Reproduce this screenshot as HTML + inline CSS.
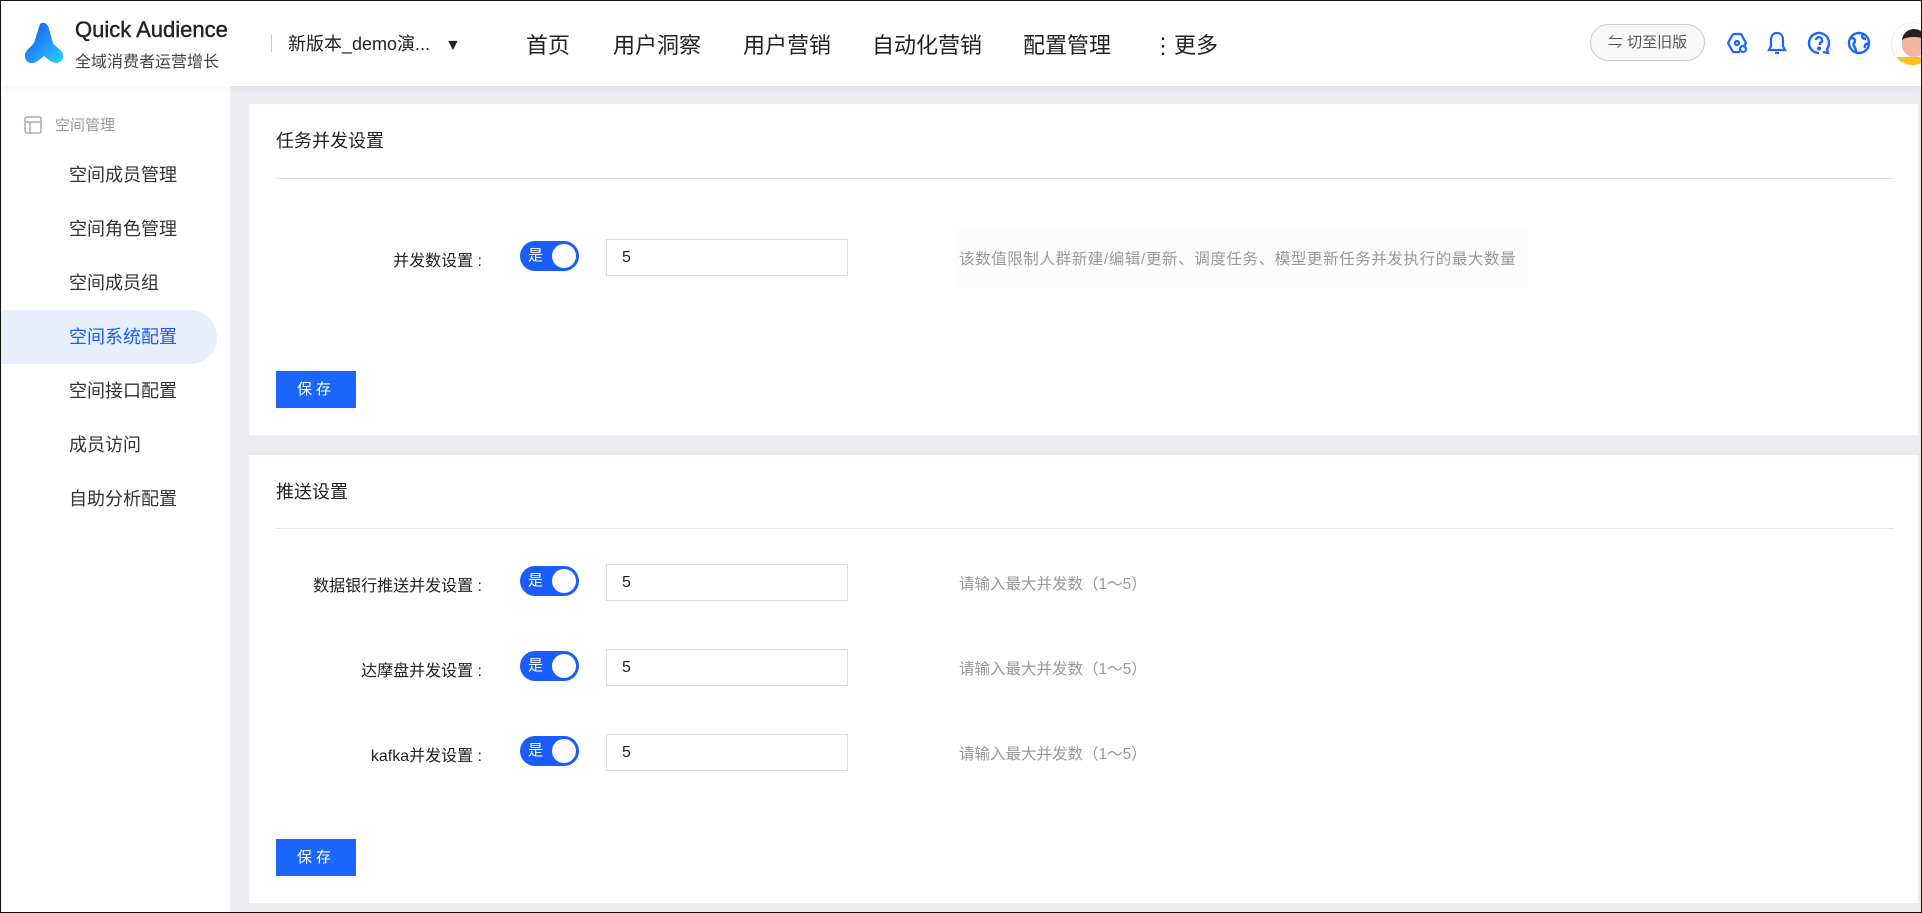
<!DOCTYPE html>
<html><head><meta charset="utf-8"><style>
*{margin:0;padding:0;box-sizing:border-box}
body{width:1922px;height:913px;overflow:hidden;background:#ebebf0;font-family:"Liberation Sans","Noto Sans CJK SC",sans-serif;position:relative;color:#222}
.frame{position:absolute;inset:0;border:1px solid #111;z-index:10;pointer-events:none}
.hdr{position:absolute;left:0;top:0;width:1922px;height:86px;background:#fff;box-shadow:0 2px 6px rgba(0,0,0,.05);z-index:2}
.a{position:absolute;white-space:nowrap}
.side{position:absolute;left:0;top:86px;width:230px;height:827px;background:#fff}
.si{position:absolute;left:69px;font-size:18px;color:#333;line-height:24px}
.card{position:absolute;left:249px;width:1669px;background:#fff}
.ttl{position:absolute;left:27px;font-size:18px;color:#222}
.div{position:absolute;left:27px;width:1618px;height:1px;background:#e3e3e8}
.lbl{position:absolute;font-size:16px;color:#222;text-align:right;width:300px;left:-67px;white-space:nowrap}
.tg{position:absolute;left:271px;width:59px;height:30px;border-radius:15px;background:#1a5cff;color:#fff;font-size:15px;line-height:30px;padding-left:8px}
.tg:after{content:"";position:absolute;right:3px;top:3px;width:24px;height:24px;border-radius:50%;background:#fff}
.inp{position:absolute;left:357px;width:242px;height:37px;border:1px solid #ddd;font-size:16px;line-height:35px;padding-left:15px;color:#222}
.hint{position:absolute;left:710px;font-size:15.5px;color:#999;white-space:nowrap}
.btn{position:absolute;left:27px;width:80px;height:37px;background:#1a66ff;color:#fff;font-size:15px;line-height:37px;text-align:center;letter-spacing:4px}
.nav{position:absolute;top:28px;font-size:22px;color:#222}
</style></head><body>
<div class="frame"></div>
<div class="hdr">
 <svg class="a" style="left:22px;top:22px" width="44" height="42" viewBox="0 0 44 42"><defs><linearGradient id="g" x1="0" y1="0" x2="1" y2="1"><stop offset="0" stop-color="#1a4dff"/><stop offset="1" stop-color="#27d3ff"/></linearGradient></defs><path d="M18 2c4-3 8 0 9 5l4 14c4 6 12 8 10 15-2 6-9 6-14 2l-5-4-5 4c-5 5-13 4-14-3-1-6 5-9 9-14z" fill="url(#g)"/></svg>
 <div class="a" style="left:75px;top:17px;font-size:22px;color:#222;-webkit-text-stroke:0.4px #222">Quick Audience</div>
 <div class="a" style="left:75px;top:48px;font-size:16px;color:#444">全域消费者运营增长</div>
 <div class="a" style="left:271px;top:34px;width:1px;height:18px;background:#ccc"></div>
 <div class="a" style="left:288px;top:30px;font-size:18px;color:#222">新版本_demo演... <span style="font-size:16px;margin-left:10px">▼</span></div>
 <div class="nav" style="left:526px">首页</div>
 <div class="nav" style="left:613px">用户洞察</div>
 <div class="nav" style="left:743px">用户营销</div>
 <div class="nav" style="left:872px">自动化营销</div>
 <div class="nav" style="left:1023px">配置管理</div>
 <div class="nav" style="left:1152px">⋮更多</div>
 <div class="a" style="left:1590px;top:24px;width:115px;height:37px;border:1px solid #ccc;border-radius:19px;background:#f7f7f9;font-size:15px;color:#555;line-height:35px;text-align:center">⇋ 切至旧版</div>
 <svg class="a" style="left:1725px;top:31px" width="24" height="24" viewBox="0 0 24 24" fill="none" stroke="#1a66ff" stroke-width="2.2"><path d="M8 3h8l5 9-2 3M15 21H8l-5-9 5-9"/><circle cx="12" cy="12" r="2"/><circle cx="18" cy="18" r="3"/></svg>
 <svg class="a" style="left:1765px;top:30px" width="24" height="26" viewBox="0 0 24 26" fill="none" stroke="#1a66ff" stroke-width="2.2"><path d="M12 3c-4 0-6 3-6 7v6l-2 4h16l-2-4v-6c0-4-2-7-6-7zM10 23h4"/></svg>
 <svg class="a" style="left:1806px;top:30px" width="26" height="26" viewBox="0 0 26 26" fill="none" stroke="#1a66ff" stroke-width="2.4"><path d="M13 23a10 10 0 1 1 8-4l1 4-5-1"/><path d="M10 10a3 3 0 1 1 4 3v2"/><circle cx="13" cy="18.5" r=".8" fill="#1a66ff"/></svg>
 <svg class="a" style="left:1846px;top:30px" width="26" height="26" viewBox="0 0 26 26" fill="none" stroke="#1a66ff" stroke-width="2.4"><circle cx="13" cy="13" r="10"/><path d="M5 8c4 0 5 3 3 5s2 4 2 9M17 4c-2 3 0 5 3 5M23 14c-3-1-5 1-4 4"/></svg>
 <div class="a" style="left:1891px;top:22px;width:44px;height:44px;border-radius:50%;background:#fff;border:1px solid #eee;overflow:hidden"><div style="position:absolute;left:10px;top:6px;width:24px;height:28px;border-radius:12px;background:#f2b6a0;border-top:8px solid #222"></div><div style="position:absolute;left:0;top:34px;width:44px;height:14px;background:#f7c21a"></div></div>
</div>
<div class="side">
 <svg class="a" style="left:24px;top:30px" width="18" height="18" viewBox="0 0 18 18" fill="none" stroke="#aab" stroke-width="1.5"><rect x="1" y="1" width="16" height="16" rx="2"/><path d="M1 6h16M6 6v11"/></svg>
 <div class="a" style="left:55px;top:28px;font-size:15px;color:#999">空间管理</div>
 <div class="si" style="top:77px">空间成员管理</div>
 <div class="si" style="top:131px">空间角色管理</div>
 <div class="si" style="top:185px">空间成员组</div>
 <div class="a" style="left:0;top:224px;width:217px;height:54px;background:#e7effd;border-radius:0 27px 27px 0"></div>
 <div class="si" style="top:239px;color:#1a5cff">空间系统配置</div>
 <div class="si" style="top:293px">空间接口配置</div>
 <div class="si" style="top:347px">成员访问</div>
 <div class="si" style="top:401px">自助分析配置</div>
</div>
<div class="card" style="top:104px;height:331px">
 <div class="ttl" style="top:23px">任务并发设置</div>
 <div class="div" style="top:74px"></div>
 <div class="lbl" style="top:143px">并发数设置 :</div>
 <div class="tg" style="top:137px">是</div>
 <div class="inp" style="top:135px">5</div>
 <div class="a" style="left:706px;top:126px;width:572px;height:57px;background:#fcfcfd"></div>
 <div class="hint" style="top:143px;letter-spacing:0.6px">该数值限制人群新建/编辑/更新、调度任务、模型更新任务并发执行的最大数量</div>
 <div class="btn" style="top:267px">保存</div>
</div>
<div class="card" style="top:455px;height:448px">
 <div class="ttl" style="top:23px">推送设置</div>
 <div class="div" style="top:73px"></div>
 <div class="lbl" style="top:117px">数据银行推送并发设置 :</div>
 <div class="tg" style="top:111px">是</div>
 <div class="inp" style="top:109px">5</div>
 <div class="hint" style="top:117px">请输入最大并发数（1～5）</div>
 <div class="lbl" style="top:202px">达摩盘并发设置 :</div>
 <div class="tg" style="top:196px">是</div>
 <div class="inp" style="top:194px">5</div>
 <div class="hint" style="top:202px">请输入最大并发数（1～5）</div>
 <div class="lbl" style="top:287px">kafka并发设置 :</div>
 <div class="tg" style="top:281px">是</div>
 <div class="inp" style="top:279px">5</div>
 <div class="hint" style="top:287px">请输入最大并发数（1～5）</div>
 <div class="btn" style="top:384px">保存</div>
</div>
</body></html>
